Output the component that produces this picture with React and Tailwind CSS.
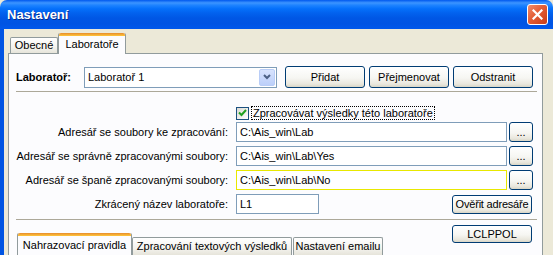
import React from 'react';

const font = { fontFamily: '"Liberation Sans", Arial, sans-serif' };

const XpButton = ({ children, className = '' }) => (
  <div
    className={`flex items-center justify-center whitespace-nowrap rounded-[3px] border border-[#003c74] bg-[linear-gradient(180deg,#ffffff_0%,#f6f6f2_55%,#e9e7dd_85%,#d8d5c6_100%)] text-[11px] text-black ${className}`}
  >
    {children}
  </div>
);

const Field = ({ value, className = '' }) => (
  <div className={`flex h-[20px] items-center border border-[#7f9db9] bg-white pl-[3px] text-[11px] ${className}`}>
    {value}
  </div>
);

const PathRow = ({ label, value, yellow }) => (
  <div className="flex items-center">
    <div className="w-[212px] shrink-0 whitespace-nowrap text-right">{label}</div>
    <Field
      value={value}
      className={`ml-[8px] w-[271px] shrink-0 ${yellow ? 'border-[#e8e800]' : ''}`}
    />
    <XpButton className="ml-[2px] h-[20px] w-[24px] shrink-0 leading-none">...</XpButton>
  </div>
);

export default function App() {
  return (
    <div className="h-[255px] w-[553px] overflow-hidden bg-[#ece9d8] text-[11px] text-black" style={font}>
      {/* title bar */}
      <div className="flex h-[29px] items-center justify-between rounded-t-[7px] bg-[linear-gradient(180deg,#0058ee_0%,#3d95ff_10%,#1e83ff_18%,#0570fb_30%,#0262ee_45%,#0057e5_62%,#0054e3_82%,#0058ec_100%)] pl-[7px] pr-[5px]">
        <span className="text-[13px] font-bold text-white [text-shadow:1px_1px_0_#0a2a8a]">Nastavení</span>
        <div className="flex h-[21px] w-[21px] items-center justify-center rounded-[3px] border border-white bg-[linear-gradient(135deg,#f08c6c_0%,#e35d36_45%,#c73c18_100%)]">
          <svg width="11" height="11" viewBox="0 0 11 11">
            <path d="M1.5 1.5 L9.5 9.5 M9.5 1.5 L1.5 9.5" stroke="white" strokeWidth="2.2" strokeLinecap="square" />
          </svg>
        </div>
      </div>

      {/* body */}
      <div className="flex h-[226px] border-l-4 border-[#0054e3]">
        <div className="flex flex-1 flex-col pl-[4px] pt-[4px]">
          {/* tabs */}
          <div className="relative z-10 flex items-end pl-[2px]">
            <div className="flex h-[16px] w-[48px] items-center justify-center rounded-t-[2px] border border-b-0 border-[#919b9c] bg-[linear-gradient(180deg,#ffffff_0%,#f4f3ee_60%,#e6e4da_100%)]">
              Obecné
            </div>
            <div className="-mb-px flex h-[21px] w-[68px] flex-col rounded-t-[2px] border border-b-0 border-[#919b9c] border-t-0 bg-[#fcfcfe]">
              <div className="h-[3px] rounded-t-[2px] bg-[linear-gradient(180deg,#e68b2c,#ffc73c)]" />
              <div className="flex flex-1 items-center justify-center pb-[1px]">Laboratoře</div>
            </div>
          </div>

          {/* panel */}
          <div className="w-[535px] flex-1 border border-[#919b9c] bg-[#fcfcfe]">
            <div className="flex items-center pl-[7px] pt-[12px]">
              <div className="w-[68px] font-bold">Laboratoř:</div>
              <div className="flex h-[21px] w-[193px] items-center justify-between border border-[#7f9db9] bg-white pl-[3px] pr-[1px]">
                <span>Laboratoř 1</span>
                <div className="flex h-[17px] w-[16px] items-center justify-center rounded-[2px] border border-[#b9cdf7] bg-[linear-gradient(180deg,#d8e3fd_0%,#bccffa_100%)]">
                  <svg width="8" height="6" viewBox="0 0 8 6">
                    <path d="M1 1 L4 4 L7 1" fill="none" stroke="#4d6185" strokeWidth="2" />
                  </svg>
                </div>
              </div>
              <XpButton className="ml-[8px] h-[22px] w-[80px]">Přidat</XpButton>
              <XpButton className="ml-[4px] h-[22px] w-[80px]">Přejmenovat</XpButton>
              <XpButton className="ml-[4px] h-[22px] w-[80px]">Odstranit</XpButton>
            </div>

            <div className="ml-[7px] mt-[3px] w-[521px] border-t border-[#aca899]" />

            <div className="flex items-center pl-[227px] pt-[14px]">
              <div className="flex h-[13px] w-[13px] items-center justify-center border border-[#1c5180] bg-[linear-gradient(135deg,#dcdbd5,#ffffff)]">
                <svg width="9" height="8" viewBox="0 0 9 8">
                  <path d="M1 3.5 L3.5 6 L8 1" fill="none" stroke="#21a121" strokeWidth="2" />
                </svg>
              </div>
              <span className="ml-[2px] border border-dotted border-black px-[1px] leading-[12px]">
                Zpracovávat výsledky této laboratoře
              </span>
            </div>

            <div className="mt-[2px] flex flex-col gap-[4px] pl-[7px]">
              <PathRow label="Adresář se soubory ke zpracování:" value="C:\Ais_win\Lab" />
              <PathRow label="Adresář se správně zpracovanými soubory:" value="C:\Ais_win\Lab\Yes" />
              <PathRow label="Adresář se španě zpracovanými soubory:" value="C:\Ais_win\Lab\No" yellow />
              <div className="flex items-center">
                <div className="w-[212px] shrink-0 text-right">Zkrácený název laboratoře:</div>
                <Field value="L1" className="ml-[8px] w-[83px] shrink-0" />
                <XpButton className="ml-[133px] h-[19px] w-[80px] shrink-0 tracking-[-0.2px]">Ověřit adresáře</XpButton>
              </div>
            </div>

            <div className="ml-[7px] mt-[5px] w-[521px] border-t border-[#aca899]" />

            <div className="flex items-start pl-[8px] pt-[5px]">
              <div className="mt-[8px] flex items-end">
                <div className="flex h-[22px] w-[115px] flex-col rounded-t-[2px] border border-b-0 border-t-0 border-[#919b9c] bg-[#fcfcfe]">
                  <div className="h-[3px] rounded-t-[2px] bg-[linear-gradient(180deg,#e68b2c,#ffc73c)]" />
                  <div className="flex flex-1 items-center justify-center">Nahrazovací pravidla</div>
                </div>
                <div className="flex h-[18px] w-[160px] items-center justify-center whitespace-nowrap rounded-t-[2px] border border-b-0 border-[#919b9c] bg-[linear-gradient(180deg,#ffffff_0%,#f4f3ee_60%,#e6e4da_100%)]">
                  Zpracování textových výsledků
                </div>
                <div className="ml-px flex h-[18px] w-[90px] items-center justify-center whitespace-nowrap rounded-t-[2px] border border-b-0 border-[#919b9c] bg-[linear-gradient(180deg,#ffffff_0%,#f4f3ee_60%,#e6e4da_100%)]">
                  Nastavení emailu
                </div>
              </div>
              <XpButton className="ml-auto mr-[10px] h-[18px] w-[80px]">LCLPPOL</XpButton>
            </div>
          </div>
        </div>
      </div>
    </div>
  );
}
